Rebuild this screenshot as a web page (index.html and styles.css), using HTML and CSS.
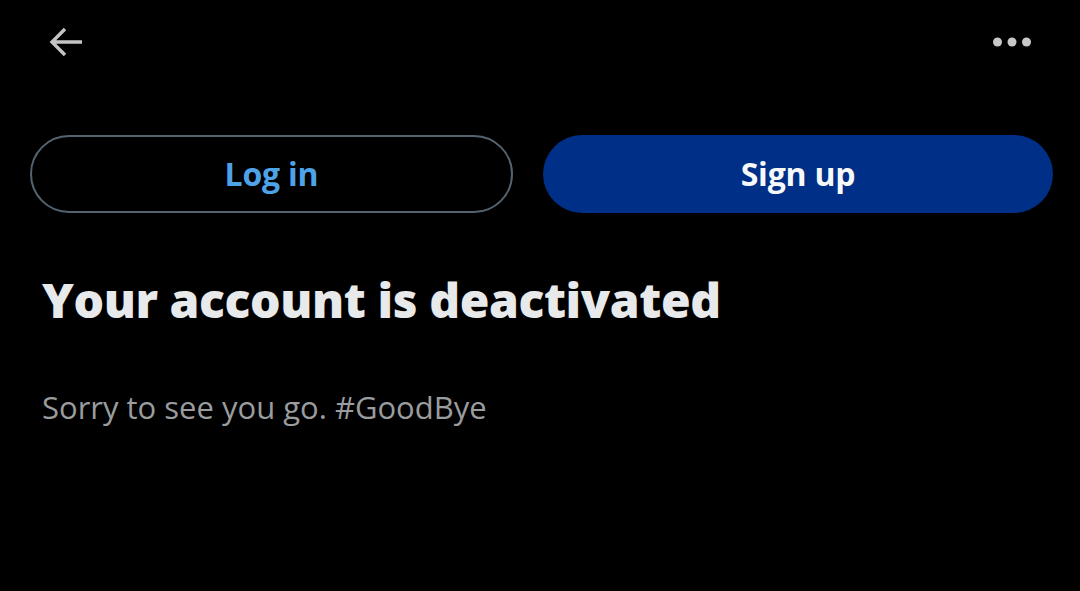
FILE: index.html
```html
<!DOCTYPE html>
<html lang="en">
<head>
  <meta charset="UTF-8" />
  <meta name="viewport" content="width=device-width, initial-scale=1.0" />
  <title>Account deactivated</title>
  <link rel="stylesheet" href="styles.css">
</head>
<body>
  <header class="topbar">
    <button class="icon-btn back" aria-label="Back">
      <svg viewBox="0 0 40 40" width="40" height="40">
        <path d="M37 20H8M20 7L7 20l13 13" fill="none" stroke="#c4c4c4" stroke-width="3.4" />
      </svg>
    </button>
    <button class="icon-btn more" aria-label="More">
      <svg viewBox="0 0 40 12" width="40" height="12">
        <circle cx="5.5" cy="6" r="4.5" fill="#c8c8c8" />
        <circle cx="20" cy="6" r="4.5" fill="#c8c8c8" />
        <circle cx="34.5" cy="6" r="4.5" fill="#c8c8c8" />
      </svg>
    </button>
  </header>

  <div class="actions">
    <button class="btn login">Log in</button>
    <button class="btn signup">Sign up</button>
  </div>

  <main class="content">
    <h1 class="title">Your account is deactivated</h1>
    <p class="desc">Sorry to see you go. #GoodBye</p>
  </main>
</body>
</html>
```

FILE: styles.css
```css
body {
  margin: 0;
  background: #000;
  font-family: "Open Sans", "Liberation Sans", sans-serif;
  color: #e7e9ea;
  height: 100vh;
  overflow: hidden;
}

.topbar {
  display: flex;
  justify-content: space-between;
  align-items: center;
  padding: 22px 48px 0 45px;
  height: 40px;
}

.icon-btn {
  background: none;
  border: none;
  padding: 0;
  display: flex;
  align-items: center;
  cursor: pointer;
}

.actions {
  display: grid;
  grid-template-columns: 483fr 510fr;
  gap: 30px;
  padding: 73px 27px 0 30px;
}

.btn {
  height: 78px;
  border-radius: 40px;
  font-family: inherit;
  font-size: 32px;
  font-weight: 700;
  cursor: pointer;
  letter-spacing: -0.2px;
  padding-bottom: 3px;
}

.login {
  background: #000;
  border: 2px solid #536471;
  color: #4ea3e8;
}

.signup {
  background: #002f87;
  border: none;
  color: #f7f9f9;
}

.content {
  padding: 0 42px;
}

.title {
  margin: 58px 0 0;
  font-size: 48px;
  font-weight: 800;
  letter-spacing: -0.4px;
  line-height: 1.2;
}

.desc {
  margin: 58px 0 0;
  font-size: 31px;
  color: #9a9c9e;
  line-height: 1.3;
}
```
